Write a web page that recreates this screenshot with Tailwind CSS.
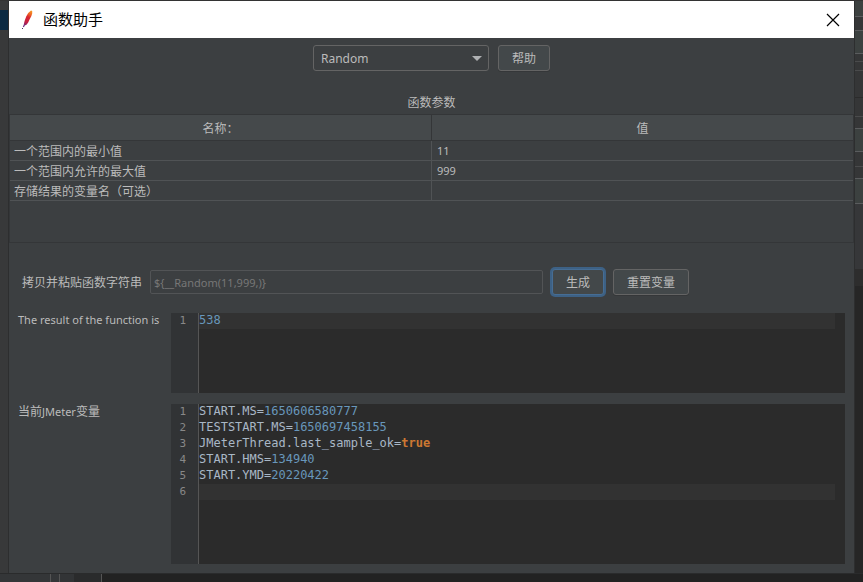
<!DOCTYPE html>
<html lang="zh-CN">
<head>
    <meta charset="UTF-8">
    <meta name="viewport" content="width=device-width, initial-scale=1.0">
    <title>函数助手</title>
    <script src="https://cdn.jsdelivr.net/npm/@tailwindcss/browser@4"></script>
</head>
<body class="bg-[#262626] min-h-screen flex flex-col text-xs text-[#bbbbbb] font-['Noto_Sans','Noto_Sans_CJK_SC',sans-serif]">
    <div class="h-px bg-[#333333]"></div>
    <div class="flex-1 flex">
        <!-- Main window behind the dialog, left edge -->
        <div class="w-[9px] shrink-0 flex flex-col bg-[#38393a] border-r border-[#2d2e2f]">
            <div class="h-[9px]"></div>
            <div class="h-5 bg-[#0c2a42]"></div>
        </div>

        <main class="flex-1 min-w-0 flex flex-col bg-[#3c3f41]">
            <header class="h-[37px] bg-white flex items-center justify-between pl-[10px] pr-[14px]">
                <div class="flex items-center gap-2">
                    <svg class="w-4 h-5" viewBox="0 0 16 20" aria-hidden="true">
                        <defs>
                            <linearGradient id="feather" gradientUnits="userSpaceOnUse" x1="13" y1="0" x2="5" y2="16">
                                <stop offset="0" stop-color="#f7a823"/>
                                <stop offset="0.25" stop-color="#ee6a25"/>
                                <stop offset="0.45" stop-color="#d9262f"/>
                                <stop offset="0.75" stop-color="#c41f45"/>
                                <stop offset="1" stop-color="#6d2a7e"/>
                            </linearGradient>
                        </defs>
                        <path d="M12 0.5 L13.2 1 L13.2 3.5 L12.4 6 L10.8 9 L9.2 12.5 L7.5 14.8 L5.6 15.6 L4.8 14.2 L5.6 11 L7.2 6.5 L9.2 3 Z" fill="url(#feather)"/>
                        <path d="M5.5 14.5 L4.4 17" stroke="#6d2a7e" stroke-width="1.2" fill="none"/>
                        <path d="M3 18 h1 v1 h-1 z" fill="#4a3560"/>
                    </svg>
                    <h1 class="pb-0.5 text-[15px] leading-5 text-black">函数助手</h1>
                </div>
                <button type="button" aria-label="关闭" class="w-[14px] h-[14px]">
                    <svg viewBox="0 0 14 14" class="w-[14px] h-[14px]"><path d="M1 1 L13 13 M13 1 L1 13" stroke="#000000" stroke-width="1.2"/></svg>
                </button>
            </header>

            <div class="flex justify-center gap-[9px] pt-[7px]">
                <div class="relative">
                    <select aria-label="函数" class="appearance-none w-44 h-[26px] pt-0.5 pl-[7px] pr-6 rounded-[3px] border border-[#646464] bg-[#3c3f41] text-xs leading-4">
                        <option>Random</option>
                    </select>
                    <svg class="absolute right-[7px] top-[11px] w-[10px] h-[5px] pointer-events-none" viewBox="0 0 10 5"><path d="M0 0 H10 L5 5 Z" fill="#afb1b3"/></svg>
                </div>
                <button type="button" class="w-[52px] h-[26px] pt-0.5 rounded-[3px] border border-[#646464] bg-[#43484a] shadow-[0_1px_0_#353739]">帮助</button>
            </div>

            <h2 id="params" class="pt-6 h-[43px] leading-4 text-center">函数参数</h2>
            <div class="h-[129px] border border-[#343638]">
                <table aria-labelledby="params" class="w-full table-fixed border-collapse leading-[14px]">
                    <thead>
                        <tr class="h-[25px] bg-[#45494b] border-b border-[#343638]">
                            <th class="p-0 pt-1 font-normal border-r border-[#343638]">名称：</th>
                            <th class="p-0 pt-1 font-normal">值</th>
                        </tr>
                    </thead>
                    <tbody>
                        <tr class="h-5 border-b border-[#505355]">
                            <td class="p-0 pt-1 pl-1 border-r border-[#505355]">一个范围内的最小值</td>
                            <td class="p-0 pt-0.5 pl-[5px] text-[11px]">11</td>
                        </tr>
                        <tr class="h-5 border-b border-[#505355]">
                            <td class="p-0 pt-1 pl-1 border-r border-[#505355]">一个范围内允许的最大值</td>
                            <td class="p-0 pt-0.5 pl-[5px] text-[11px]">999</td>
                        </tr>
                        <tr class="h-5 border-b border-[#505355]">
                            <td class="p-0 pt-1 pl-1 border-r border-[#505355]">存储结果的变量名（可选）</td>
                            <td class="p-0 pt-0.5 pl-[5px] text-[11px]"></td>
                        </tr>
                    </tbody>
                </table>
            </div>

            <div class="flex items-center pt-[26px] pl-[13px]">
                <label for="expression" class="w-32 shrink-0 pt-0.5">拷贝并粘贴函数字符串</label>
                <input id="expression" type="text" readonly value="${__Random(11,999,)}"
                    class="w-[393px] min-w-0 h-6 px-[3px] rounded-[2px] border border-[#525456] text-[11px] text-[#777777]">
                <button type="button" class="ml-[9px] w-[52px] h-[26px] pt-0.5 shrink-0 rounded-[3px] border border-[#466d94] bg-[#43484a] ring-2 ring-[#3d6185]">生成</button>
                <button type="button" class="ml-[9px] w-[76px] h-[26px] pt-0.5 shrink-0 rounded-[3px] border border-[#646464] bg-[#43484a] shadow-[0_1px_0_#353739]">重置变量</button>
            </div>

            <div class="flex pt-[18px] pr-[9px] pl-[9px]">
                <div id="result-label" class="w-[153px] shrink-0 text-[11px] leading-[14px] whitespace-nowrap">The result of the function is</div>
                <div class="flex-1 min-w-0 h-20 flex bg-[#2b2b2b] text-xs leading-4 font-['DejaVu_Sans_Mono',monospace]">
                    <div class="w-7 shrink-0 pr-3 border-r border-[#555555] bg-[#313335] text-right text-[11px] leading-4 text-[#888888]">1</div>
                    <div role="textbox" aria-multiline="true" aria-labelledby="result-label" contenteditable="true" class="flex-1 min-w-0 pr-[10px] text-[#6897bb]">
                        <div class="h-4 bg-[#323232] leading-[14px]">538</div>
                    </div>
                </div>
            </div>

            <div class="flex-1 flex pt-[11px] pb-[9px] pr-[9px] pl-[9px]">
                <div id="variables-label" class="w-[153px] shrink-0 leading-4">当前<span class="text-[11px]">JMeter</span>变量</div>
                <div class="flex-1 min-w-0 min-h-40 flex bg-[#2b2b2b] text-xs leading-4 text-[#a9b7c6] font-['DejaVu_Sans_Mono',monospace]">
                    <div class="w-7 shrink-0 pr-3 border-r border-[#555555] bg-[#313335] text-right text-[11px] leading-4 text-[#888888]">
                        <div>1</div>
                        <div>2</div>
                        <div>3</div>
                        <div>4</div>
                        <div>5</div>
                        <div>6</div>
                    </div>
                    <div role="textbox" aria-multiline="true" aria-labelledby="variables-label" contenteditable="true" class="flex-1 min-w-0 pr-[10px] leading-[14px]">
                        <div class="h-4">START.MS=<span class="text-[#6897bb]">1650606580777</span></div>
                        <div class="h-4">TESTSTART.MS=<span class="text-[#6897bb]">1650697458155</span></div>
                        <div class="h-4">JMeterThread.last_sample_ok=<span class="font-bold text-[#cc7832]">true</span></div>
                        <div class="h-4">START.HMS=<span class="text-[#6897bb]">134940</span></div>
                        <div class="h-4">START.YMD=<span class="text-[#6897bb]">20220422</span></div>
                        <div class="h-4 bg-[#323232]"></div>
                    </div>
                </div>
            </div>
        </main>

        <!-- Main window behind the dialog, right edge -->
        <div class="w-[9px] shrink-0 flex flex-col bg-[#262626] border-l border-[#2d2e2f]">
            <div class="h-4 bg-[#3c4140] border-b border-[#5a5c5e]"></div>
            <div class="h-[14px] bg-[#353637] border-b border-[#5a5c5e]"></div>
            <div class="h-[23px] bg-[#3c4140] border-b border-[#5a5c5e]"></div>
            <div class="h-2 bg-[#353637] border-b border-[#4a4b4c]"></div>
            <div class="h-[9px] bg-[#353637] border-b border-[#4a4b4c]"></div>
            <div class="h-[27px] bg-[#353637] border-b border-[#2b2b2b]"></div>
            <div class="h-[19px] bg-[#353637] border-b border-[#4a4b4c]"></div>
            <div class="h-3 bg-[#353637] border-b border-[#5a5c5e]"></div>
            <div class="h-[23px] bg-[#3c4140] border-b border-[#5a5c5e]"></div>
            <div class="h-[15px] bg-[#353637] border-b border-[#4a4b4c]"></div>
            <div class="h-3 bg-[#353637] border-b border-[#5a5c5e]"></div>
            <div class="h-[25px] bg-[#3c4140] border-b border-[#5a5c5e]"></div>
            <div class="h-[65px] bg-[#363739]"></div>
            <div class="h-[17px] bg-[#2d2d2d]"></div>
        </div>
    </div>

    <!-- Main window behind the dialog, bottom edge -->
    <div class="h-[9px] flex bg-[#222222] border-t border-[#2a2b2c]">
        <div class="w-[51px] bg-[#343638] border-r border-[#555555]"></div>
        <div class="w-[9px] bg-[#343638] border-r border-[#555555]"></div>
        <div class="w-[14px] bg-[#323436]"></div>
        <div class="w-7 bg-[#2a2b2c] border-r border-[#555555]"></div>
    </div>
</body>
</html>
